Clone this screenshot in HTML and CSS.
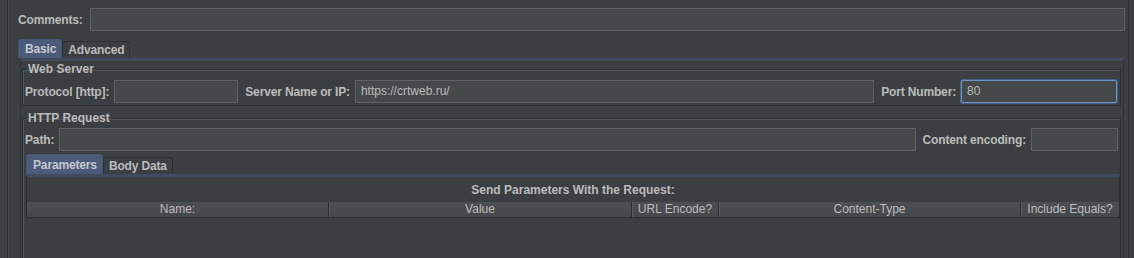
FILE: index.html
```html
<!DOCTYPE html>
<html lang="en">
<head>
    <meta charset="UTF-8">
    <meta name="viewport" content="width=device-width, initial-scale=1.0">
    <title>HTTP Request</title>
    <link rel="stylesheet" href="styles.css">
</head>
<body>

<div class="page">
    <div class="row comments">
        <label class="lbl">Comments:</label>
        <div class="field grow"></div>
    </div>

    <div class="tabs">
        <div class="tab active">Basic</div>
        <div class="tab">Advanced</div>
    </div>

    <div class="tab-body">
        <fieldset class="group web">
            <legend>Web Server</legend>
            <div class="row">
                <label class="lbl">Protocol [http]:</label>
                <div class="field protocol"></div>
                <label class="lbl">Server Name or IP:</label>
                <div class="field grow">https://crtweb.ru/</div>
                <label class="lbl">Port Number:</label>
                <div class="field port focus">80</div>
            </div>
        </fieldset>

        <fieldset class="group request">
            <legend>HTTP Request</legend>
            <div class="row path">
                <label class="lbl">Path:</label>
                <div class="field grow"></div>
                <label class="lbl">Content encoding:</label>
                <div class="field encoding"></div>
            </div>

            <div class="tabs inner">
                <div class="tab active">Parameters</div>
                <div class="tab">Body Data</div>
            </div>

            <div class="tab-body inner">
                <div class="caption">Send Parameters With the Request:</div>
                <div class="thead">
                    <div class="th c-name">Name:</div>
                    <div class="th c-value">Value</div>
                    <div class="th c-url">URL Encode?</div>
                    <div class="th c-type">Content-Type</div>
                    <div class="th c-eq">Include Equals?</div>
                </div>
            </div>
        </fieldset>
    </div>
</div>

</body>
</html>
```

FILE: styles.css
```css
html, body {
    margin: 0;
    height: 100%;
    overflow: hidden;
}
body {
    background-color: #3c3f41;
    color: #bbbbbb;
    font-family: "Liberation Sans", Arial, sans-serif;
    font-size: 12px;
}
.page {
    margin-left: 7px;
    width: 1122px;
    height: 100%;
    box-sizing: border-box;
    padding-top: 8px;
    border-left: 1px solid #2d2f31;
    border-right: 1px solid #2d2f31;
    box-shadow: inset 1px 0 #45484a;
    display: flex;
    flex-direction: column;
}
.row {
    display: flex;
    align-items: center;
}
.lbl {
    font-weight: bold;
    letter-spacing: -0.15px;
    white-space: nowrap;
    margin-right: 5px;
}
.field + .lbl {
    margin-left: 7px;
}
.field {
    height: 23px;
    box-sizing: border-box;
    background: #45494a;
    border: 1px solid #5e6162;
    padding: 0 5px;
    line-height: 21px;
    white-space: nowrap;
}
.grow {
    flex: 1;
}
.comments {
    padding: 0 3px 0 10px;
}
.comments .lbl {
    margin-right: 7px;
}
.protocol {
    width: 124px;
}
.port {
    width: 156px;
    margin-right: 1px;
}
.encoding {
    width: 87px;
}
.field.focus {
    border: 1px solid #6f93c8;
    border-radius: 2px;
    box-shadow: 0 0 0 1px #45618a;
}

/* tabs */
.tabs {
    display: flex;
    align-items: flex-end;
    margin: 8px 0 0 10px;
}
.tab {
    height: 17px;
    box-sizing: border-box;
    padding: 0 5px;
    border: 1px solid #2e3133;
    border-bottom: none;
    border-radius: 3px 3px 0 0;
    font-weight: bold;
    letter-spacing: -0.15px;
    line-height: 17px;
    color: #bbbbbb;
}
.tab.active {
    height: 19px;
    padding: 0 5px 0 6px;
    background: #4b5b79;
    border-color: #475670;
    line-height: 19px;
    color: #c4c8d0;
}
.tab-body {
    flex: 1;
    margin: 0 4px 0 12px;
    padding: 1px 2px 0 1px;
    border-left: 1px solid #2f3234;
    border-right: 1px solid #2f3234;
    border-top: 3px solid #404b60;
}

/* titled borders */
.group {
    margin: 0;
    padding: 0 2px 2px 2px;
    border: 1px solid #2e3133;
    box-shadow: inset 1px 1px 0 #505355;
}
.group legend {
    margin-left: 1px;
    padding: 0 2px;
    font-weight: bold;
    line-height: 14px;
    color: #bbbbbb;
}
.web .row {
    padding-top: 4px;
}
.web .port {
    margin-right: 1px;
}
.request {
    margin-top: 5px;
    height: 150px;
    padding-bottom: 0;
}
.path {
    padding-top: 3px;
}
.tabs.inner {
    margin: 3px 0 0 1px;
}
.tabs.inner .tab.active {
    height: 20px;
    line-height: 20px;
}
.tab-body.inner {
    margin: 0 -2px 0 1px;
    padding: 0;
    border-left-color: #2b2d2f;
    border-right-color: #2b2d2f;
}
.caption {
    margin: 6px 0 5px;
    font-weight: bold;
    line-height: 14px;
    text-align: center;
}

/* table header */
.thead {
    display: flex;
    height: 16px;
    box-sizing: border-box;
    background: linear-gradient(#4d5052, #45484a);
    border-bottom: 1px solid #2b2d2f;
}
.th {
    box-sizing: border-box;
    line-height: 15px;
    text-align: center;
    white-space: nowrap;
    border-right: 1px solid #2b2d2f;
    box-shadow: 1px 0 #5a5d5f;
}
.c-name { width: 302px; }
.c-value { width: 303px; }
.c-url { width: 87px; }
.c-type { width: 302px; }
.c-eq { flex: 1; border-right: none; box-shadow: none; }
```
